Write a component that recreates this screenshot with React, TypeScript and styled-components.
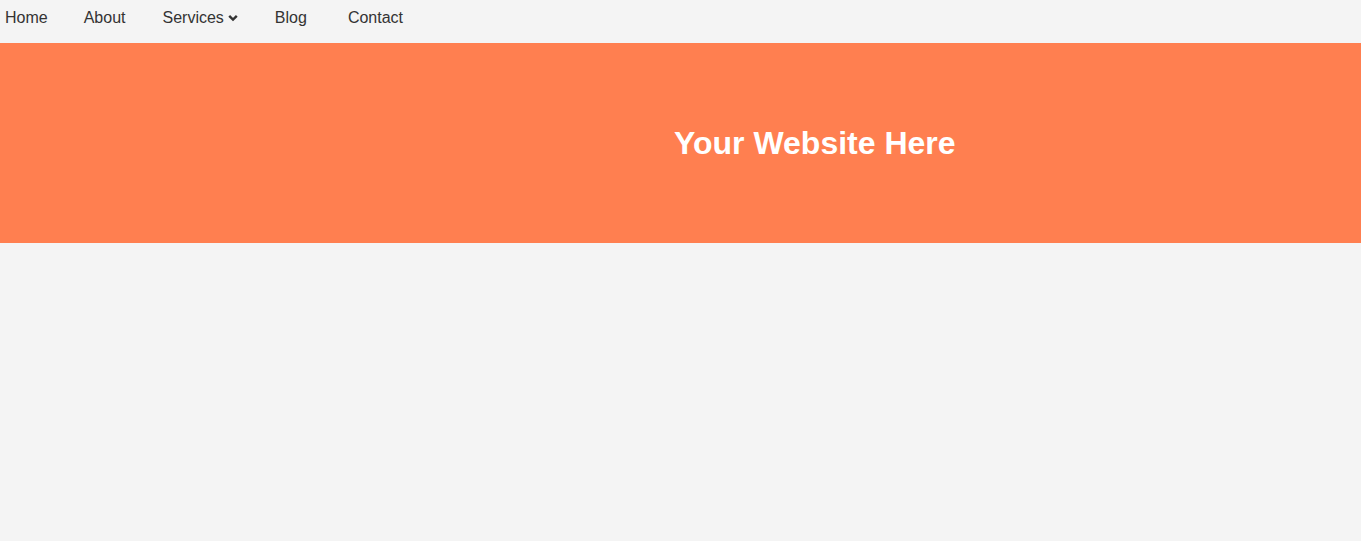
import React from "react";
import styled, { createGlobalStyle } from "styled-components";

const Global = createGlobalStyle`
  html, body { margin: 0; padding: 0; background: #f4f4f4; }
  body { font-family: "Liberation Sans", Arial, sans-serif; }
`;

const Nav = styled.nav`
  height: 43px;
  box-sizing: border-box;
  padding: 9px 0 0 5px;
  display: flex;
  align-items: flex-start;
  background: #f4f4f4;
`;

const NavLink = styled.a<{ $gap: number }>`
  display: inline-flex;
  align-items: center;
  color: #333;
  font-size: 16px;
  line-height: 18px;
  text-decoration: none;
  margin-right: ${(p) => p.$gap}px;
`;

const Chevron = styled.svg`
  margin-left: 4px;
  width: 10px;
  height: 8px;
`;

const Hero = styled.header`
  height: 200px;
  background: #ff7f50;
  display: flex;
  align-items: center;
  padding-left: 674px;
  box-sizing: border-box;
`;

const Title = styled.h1`
  margin: 0;
  color: #fff;
  font-size: 32px;
  font-weight: bold;
  line-height: 37px;
`;

export default function App() {
  return (
    <>
      <Global />
      <Nav>
        <NavLink href="#" $gap={36}>Home</NavLink>
        <NavLink href="#" $gap={37}>About</NavLink>
        <NavLink href="#" $gap={37}>
          Services
          <Chevron viewBox="0 0 10 8">
            <path d="M1.2 1.8 L5 5.6 L8.8 1.8" fill="none" stroke="#333" strokeWidth="2.4" />
          </Chevron>
        </NavLink>
        <NavLink href="#" $gap={41}>Blog</NavLink>
        <NavLink href="#" $gap={0}>Contact</NavLink>
      </Nav>
      <Hero>
        <Title>Your Website Here</Title>
      </Hero>
    </>
  );
}
